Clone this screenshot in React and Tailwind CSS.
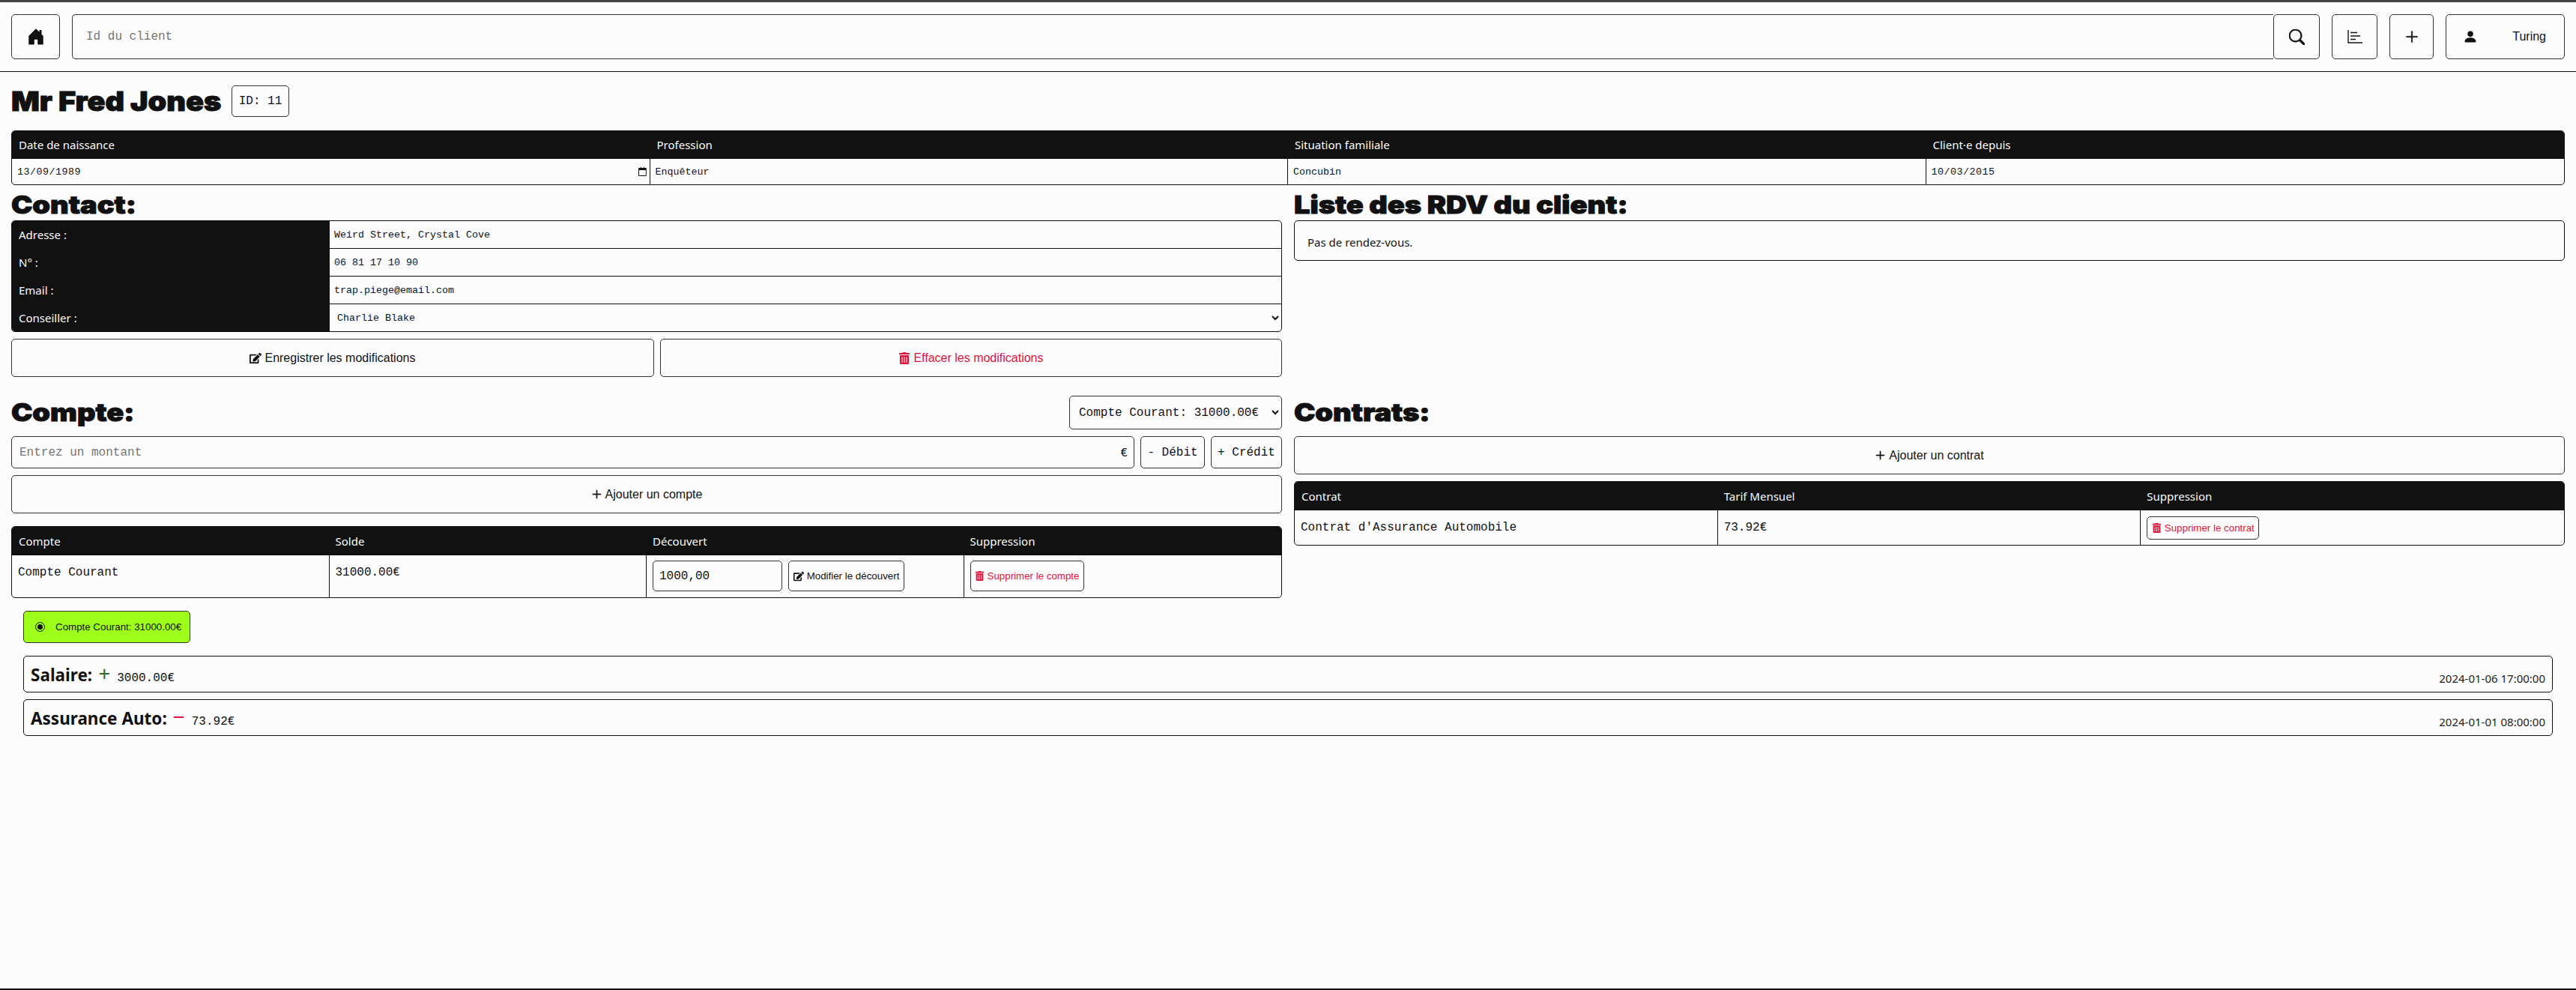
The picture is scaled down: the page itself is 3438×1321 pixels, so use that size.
import React from 'react';
import { FaEdit, FaTrashAlt } from 'react-icons/fa';
import { BsHouseDoorFill, BsSearch, BsPlusLg, BsPersonFill } from 'react-icons/bs';

const mono = "font-['Liberation_Mono',monospace]";
const sans = "font-['Noto_Sans',sans-serif]";
const arial = "font-['Liberation_Sans',sans-serif]";
const title = "block w-fit origin-left scale-x-[1.15] whitespace-nowrap font-['Inter',sans-serif] font-black text-[#111] text-[33px] leading-none [-webkit-text-stroke:1px_#111]";
const box = "flex items-center rounded-[5px] border border-[#333] bg-[#fcfcfc] text-[#111]";
const btn = "flex items-center justify-center gap-1 rounded-[5px] border border-[#333] bg-[#fcfcfc] text-[#111]";
const cellInput = "w-full h-full bg-transparent outline-none font-['Liberation_Mono',monospace] text-[13.33px] text-[#111]";

function Title({ children }) {
  return <h2 className={title}>{children}</h2>;
}

function StatsIcon() {
  return (
    <svg width="20" height="18" viewBox="0 0 20 18" fill="none" stroke="#111" strokeWidth="1.4">
      <path d="M1 0v17h19" />
      <path d="M4 3.5h9M4 8h13M4 12.5h7" />
    </svg>
  );
}

function CalendarIcon() {
  return (
    <svg width="11" height="12" viewBox="0 0 11 12" fill="#111">
      <path d="M1 1h2V0h1v1h3V0h1v1h2a1 1 0 0 1 1 1v9a1 1 0 0 1-1 1H1a1 1 0 0 1-1-1V2a1 1 0 0 1 1-1zm0 3v7h9V4z" />
    </svg>
  );
}

function Nav() {
  return (
    <nav className="flex h-[93px] items-center gap-4 border-b border-[#111] px-[15px]">
      <button className={`${btn} h-[60px] w-[65px]`}>
        <BsHouseDoorFill size={24} color="#111" />
      </button>
      <div className="flex h-[60px] grow">
        <input
          placeholder="Id du client"
          className={`${mono} grow rounded-l-[5px] border border-r-0 border-[#333] bg-transparent pl-[18px] text-base outline-none placeholder:text-[#757575]`}
        />
        <button className={`${btn} w-[62px]`}>
          <BsSearch size={21} color="#111" stroke="#111" strokeWidth={0.7} />
        </button>
      </div>
      <button className={`${btn} h-[60px] w-[61px]`}>
        <StatsIcon />
      </button>
      <button className={`${btn} h-[60px] w-[59px]`}>
        <BsPlusLg size={20} color="#111" stroke="#111" strokeWidth={0.6} />
      </button>
      <button className={`${box} ${arial} h-[60px] w-[159px] justify-between pl-[22px] pr-6 text-base`}>
        <BsPersonFill size={20} color="#111" />
        <span>Turing</span>
      </button>
    </nav>
  );
}

function InfoTable() {
  const cols = [
    ['Date de naissance', '13/09/1989', true],
    ['Profession', 'Enquêteur', false],
    ['Situation familiale', 'Concubin', false],
    ['Client·e depuis', '10/03/2015', true],
  ];
  return (
    <div className="mt-[18px] overflow-hidden rounded-[5px] border border-[#111]">
      <div className={`${sans} grid grid-cols-4 bg-[#111] text-[15px] text-[#fcfcfc]`}>
        {cols.map(([label]) => (
          <div key={label} className="flex h-[37px] items-center pl-[9px]">{label}</div>
        ))}
      </div>
      <div className="grid grid-cols-4">
        {cols.map(([label, value, isDate], i) => (
          <div key={label} className={`flex h-[34px] items-center pl-[7px] pr-[4px] ${i < 3 ? 'border-r border-[#111]' : ''}`}>
            <input readOnly value={value} className={`${cellInput} ${isDate ? 'tracking-[0.5px]' : ''}`} />
            {i === 0 && <CalendarIcon />}
          </div>
        ))}
      </div>
    </div>
  );
}

function Contact() {
  const rows = [
    ['Adresse :', 'Weird Street, Crystal Cove'],
    ['N° :', '06 81 17 10 90'],
    ['Email :', 'trap.piege@email.com'],
  ];
  return (
    <div className="overflow-hidden rounded-[5px] border border-[#111]">
      {rows.map(([label, value]) => (
        <div key={label} className="grid h-[37px] grid-cols-[424px_1fr] border-b border-[#111]">
          <div className={`${sans} flex items-center bg-[#111] pl-[9px] text-[15px] text-[#fcfcfc]`}>{label}</div>
          <input readOnly value={value} className={`${cellInput} pl-[6px]`} />
        </div>
      ))}
      <div className="grid h-[36px] grid-cols-[424px_1fr]">
        <div className={`${sans} flex items-center bg-[#111] pl-[9px] text-[15px] text-[#fcfcfc]`}>Conseiller :</div>
        <select className={`${cellInput} pl-[6px]`} defaultValue="Charlie Blake">
          <option>Charlie Blake</option>
        </select>
      </div>
    </div>
  );
}

function AccountTable() {
  return (
    <div className="mt-[17px] overflow-hidden rounded-[5px] border border-[#111]">
      <div className={`${sans} grid h-[38px] grid-cols-4 items-center bg-[#111] text-[15px] text-[#fcfcfc]`}>
        <div className="pl-[9px]">Compte</div>
        <div className="pl-[8px]">Solde</div>
        <div className="pl-[8px]">Découvert</div>
        <div className="pl-[8px]">Suppression</div>
      </div>
      <div className={`${mono} grid h-[56px] grid-cols-4 text-base text-[#111]`}>
        <div className="border-r border-[#111] pl-[8px] pt-[11px]">Compte Courant</div>
        <div className="border-r border-[#111] pl-[8px] pt-[11px]">31000.00€</div>
        <div className="flex gap-2 border-r border-[#111] pl-[8px] pt-[7px]">
          <input readOnly value="1000,00" className={`${mono} h-[41px] w-[173px] rounded-[5px] border border-[#333] bg-transparent pl-[8px] text-base outline-none`} />
          <button className={`${btn} ${arial} h-[41px] w-[155px] text-[13.33px]`}>
            <FaEdit size={14} color="#111" /> Modifier le découvert
          </button>
        </div>
        <div className="pl-[8px] pt-[7px]">
          <button className={`${btn} ${arial} h-[41px] w-[152px] text-[13.33px] text-[#dc143c]`}>
            <FaTrashAlt size={13} color="#dc143c" /> Supprimer le compte
          </button>
        </div>
      </div>
    </div>
  );
}

function ContractTable() {
  return (
    <div className="mt-[9px] overflow-hidden rounded-[5px] border border-[#111]">
      <div className={`${sans} grid h-[38px] grid-cols-3 items-center bg-[#111] text-[15px] text-[#fcfcfc]`}>
        <div className="pl-[9px]">Contrat</div>
        <div className="pl-[8px]">Tarif Mensuel</div>
        <div className="pl-[8px]">Suppression</div>
      </div>
      <div className={`${mono} grid h-[46px] grid-cols-3 text-base text-[#111]`}>
        <div className="border-r border-[#111] pl-[8px] pt-[11px]">Contrat d'Assurance Automobile</div>
        <div className="border-r border-[#111] pl-[8px] pt-[11px]">73.92€</div>
        <div className="pl-[8px] pt-[8px]">
          <button className={`${btn} ${arial} h-[31px] w-[150px] text-[13.33px] text-[#dc143c]`}>
            <FaTrashAlt size={13} color="#dc143c" /> Supprimer le contrat
          </button>
        </div>
      </div>
    </div>
  );
}

function Transaction({ label, sign, signClass, amount, date }) {
  return (
    <div className="flex h-[49px] items-end justify-between rounded-[5px] border border-[#111] px-[9px] pb-[6px]">
      <div className="flex items-baseline leading-[30px]">
        <span className={`${sans} text-[22.5px] font-bold text-[#111]`}>{label}</span>
        <span className={`${sans} ml-2 text-[28px] leading-none ${signClass}`}>{sign}</span>
        <span className={`${mono} ml-[9px] text-base text-[#111]`}>{amount}</span>
      </div>
      <span className={`${sans} pb-[1px] text-[15px] text-[#222]`}>{date}</span>
    </div>
  );
}

export default function App() {
  return (
    <div className="min-h-screen border-t-[3px] border-b-2 border-t-[#444] border-b-[#111] bg-[#fcfcfc] text-[#111]">
      <Nav />
      <main className="px-[15px]">
        <div className="flex items-center gap-4 pt-[18px]">
          <h1 className="w-[278px] origin-left scale-x-[1.1] whitespace-nowrap font-['Inter',sans-serif] text-[36px] font-black leading-none text-[#111] [-webkit-text-stroke:1px_#111]">Mr Fred Jones</h1>
          <span className={`${mono} flex h-[42px] w-[77px] items-center justify-center rounded-[5px] border border-[#333] text-base`}>ID: 11</span>
        </div>
        <InfoTable />
        <div className="mt-[10px] grid grid-cols-2 gap-x-4">
          <section>
            <Title>Contact:</Title>
            <div className="mt-1"><Contact /></div>
            <div className="mt-[9px] flex h-[51px] gap-2">
              <button className={`${btn} ${arial} grow px-4 text-base`}><FaEdit size={16} color="#111" /> Enregistrer les modifications</button>
              <button className={`${btn} ${arial} grow px-4 text-base text-[#dc143c]`}><FaTrashAlt size={16} color="#dc143c" /> Effacer les modifications</button>
            </div>
          </section>
          <section>
            <Title>Liste des RDV du client:</Title>
            <div className={`${sans} mt-1 flex h-[54px] items-center rounded-[5px] border border-[#111] pl-[17px] pt-1 text-[15px]`}>Pas de rendez-vous.</div>
          </section>

          <section className="mt-[25px]">
            <div className="flex h-[45px] items-center justify-between">
              <Title>Compte:</Title>
              <select className={`${mono} h-[45px] w-[284px] rounded-[5px] border border-[#333] bg-transparent pl-[8px] text-base outline-none`} defaultValue="a">
                <option value="a">Compte Courant: 31000.00€</option>
              </select>
            </div>
            <div className="mt-[9px] flex h-[43px] gap-2">
              <div className="relative grow">
                <input placeholder="Entrez un montant" className={`${mono} h-full w-full rounded-[5px] border border-[#333] bg-transparent pl-[10px] text-base outline-none placeholder:text-[#757575]`} />
                <span className={`${mono} absolute right-[9px] top-[11px] text-base`}>€</span>
              </div>
              <button className={`${btn} ${mono} w-[86px] text-base`}>- Débit</button>
              <button className={`${btn} ${mono} w-[95px] text-base`}>+ Crédit</button>
            </div>
            <button className={`${btn} ${arial} mt-[9px] h-[51px] w-full text-base`}><BsPlusLg size={15} color="#111" stroke="#111" strokeWidth={0.8} /> Ajouter un compte</button>
            <AccountTable />
          </section>
          <section className="mt-[25px]">
            <div className="flex h-[45px] items-center"><Title>Contrats:</Title></div>
            <button className={`${btn} ${arial} mt-[9px] h-[51px] w-full text-base`}><BsPlusLg size={15} color="#111" stroke="#111" strokeWidth={0.8} /> Ajouter un contrat</button>
            <ContractTable />
          </section>
        </div>

        <div className="px-4">
          <div className={`${arial} mt-[17px] flex h-[43px] w-[223px] items-center gap-[14px] rounded-[5px] border border-[#333] bg-[#9eff1a] pl-[15px] text-[13.33px]`}>
            <span className="flex h-[13px] w-[13px] items-center justify-center rounded-full border border-[#111]">
              <span className="h-[7px] w-[7px] rounded-full bg-[#111]" />
            </span>
            <span>Compte Courant: 31000.00€</span>
          </div>
          <div className="mt-[17px] flex flex-col gap-[9px]">
            <Transaction label="Salaire:" sign="+" signClass="text-[#2e6b2e]" amount="3000.00€" date="2024-01-06 17:00:00" />
            <Transaction label="Assurance Auto:" sign="−" signClass="text-[#dc143c]" amount="73.92€" date="2024-01-01 08:00:00" />
          </div>
        </div>
      </main>
    </div>
  );
}
